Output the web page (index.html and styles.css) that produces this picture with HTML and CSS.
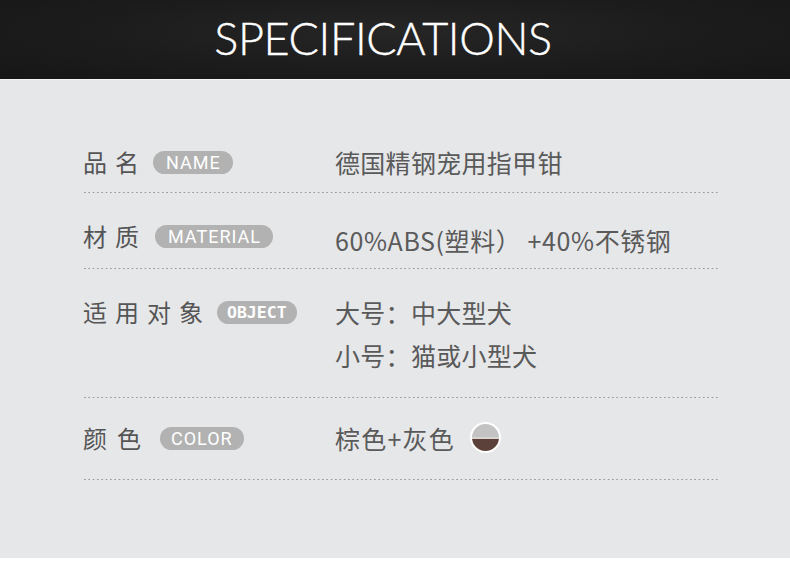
FILE: index.html
```html
<!DOCTYPE html>
<html lang="zh-CN">
<head>
<meta charset="utf-8">
<title>Specifications</title>
<link rel="stylesheet" href="styles.css">
</head>
<body>
<div class="page">
  <header class="hero">
    <h1 class="hero-title">SPECIFICATIONS</h1>
  </header>
  <section class="specs">
    <div class="row row--first">
      <div class="label"><span class="label-text">品名</span><span class="badge">NAME</span></div>
      <div class="value">德国精钢宠用指甲钳</div>
    </div>
    <div class="row row--second">
      <div class="label"><span class="label-text">材质</span><span class="badge badge--material">MATERIAL</span></div>
      <div class="value value--low">60%ABS(塑料）&nbsp;+40%不锈钢</div>
    </div>
    <div class="row row--multi">
      <div class="label"><span class="label-text">适用对象</span><span class="badge badge--bold">OBJECT</span></div>
      <div class="value value--stack">
        <div class="value-line">大号：中大型犬</div>
        <div class="value-line">小号：猫或小型犬</div>
      </div>
    </div>
    <div class="row row--last">
      <div class="label"><span class="label-text label-text--wide">颜色</span><span class="badge badge--color">COLOR</span></div>
      <div class="value value--high"><span class="value-wide">棕色+灰色</span><span class="swatch"></span></div>
    </div>
  </section>
  <div class="foot"></div>
</div>
</body>
</html>
```

FILE: styles.css
```css
* { box-sizing: border-box; margin: 0; padding: 0; }

html, body {
  width: 790px;
  height: 578px;
  overflow: hidden;
  background: #ffffff;
}

body {
  font-family: "Noto Sans CJK SC", "Noto Sans", sans-serif;
  color: #555555;
}

.page {
  width: 790px;
  display: flex;
  flex-direction: column;
}

.hero {
  height: 80px;
  background: radial-gradient(ellipse at 50% 40%, #262626 0%, #1c1c1c 55%, #161616 100%);
  border-bottom: 1px solid #f4f4f4;
  display: flex;
  justify-content: center;
  padding-right: 24px;
}

.hero-title {
  font-family: "Lato", "Open Sans", sans-serif;
  font-weight: 300;
  font-size: 45px;
  line-height: 80px;
  color: #ffffff;
  letter-spacing: -0.4px;
  margin-top: -2px;
  -webkit-text-stroke: 0.4px #ffffff;
}

.specs {
  height: 478px;
  background: #e6e7e9;
  padding: 0 72px 0 83px;
  display: flex;
  flex-direction: column;
}

.row {
  display: flex;
  align-items: flex-start;
  padding-top: 31px;
  padding-bottom: 17px;
  background-image: linear-gradient(to right, #9a9a9a 0 2px, transparent 2px);
  background-size: 4.33px 1px;
  background-repeat: repeat-x;
  background-position: 1px 100%;
}

.row--first { padding-top: 70px; padding-bottom: 19px; }
.row--second { padding-bottom: 17px; }
.row--multi { padding-bottom: 31px; }
.row--last { padding-top: 28px; padding-bottom: 27px; }

.label {
  width: 252px;
  flex: none;
  display: flex;
  align-items: center;
  height: 24px;
}

.label-text {
  font-size: 24px;
  line-height: 24px;
  letter-spacing: 8px;
  color: #555555;
}

.label-text--wide { letter-spacing: 10px; }

.badge {
  margin-left: 6px;
  height: 23px;
  border-radius: 12px;
  background: #b2b2b2;
  color: #ffffff;
  font-family: "Roboto", "DejaVu Sans", sans-serif;
  font-size: 18px;
  line-height: 23px;
  letter-spacing: 1px;
  padding: 0 12px 0 13px;
}

.badge--material { margin-left: 8px; }
.badge--color { margin-left: 9px; padding: 0 11px 0 11px; }

.badge--bold {
  font-family: "DejaVu Sans Mono", "Liberation Mono", monospace;
  font-weight: bold;
  font-size: 16.5px;
  letter-spacing: 0;
  padding: 0 10px 0 10px;
}

.value {
  font-size: 25px;
  line-height: 24px;
  letter-spacing: 0.3px;
  color: #5a5a5a;
  display: flex;
  align-items: center;
}

.value--low { margin-top: 4px; letter-spacing: 0.6px; }
.value--high { margin-top: -4px; }

.value-wide { letter-spacing: 1.2px; }

.value--stack {
  flex-direction: column;
  align-items: flex-start;
  gap: 19px;
}

.swatch {
  width: 31px;
  height: 31px;
  border-radius: 50%;
  border: 2px solid #ffffff;
  margin-left: 15px;
  background: linear-gradient(to bottom, #c3c3c3 0 50%, #d8d4d2 50% 55%, #5b4139 55% 100%);
}

.foot {
  height: 20px;
  background: #ffffff;
}
```
